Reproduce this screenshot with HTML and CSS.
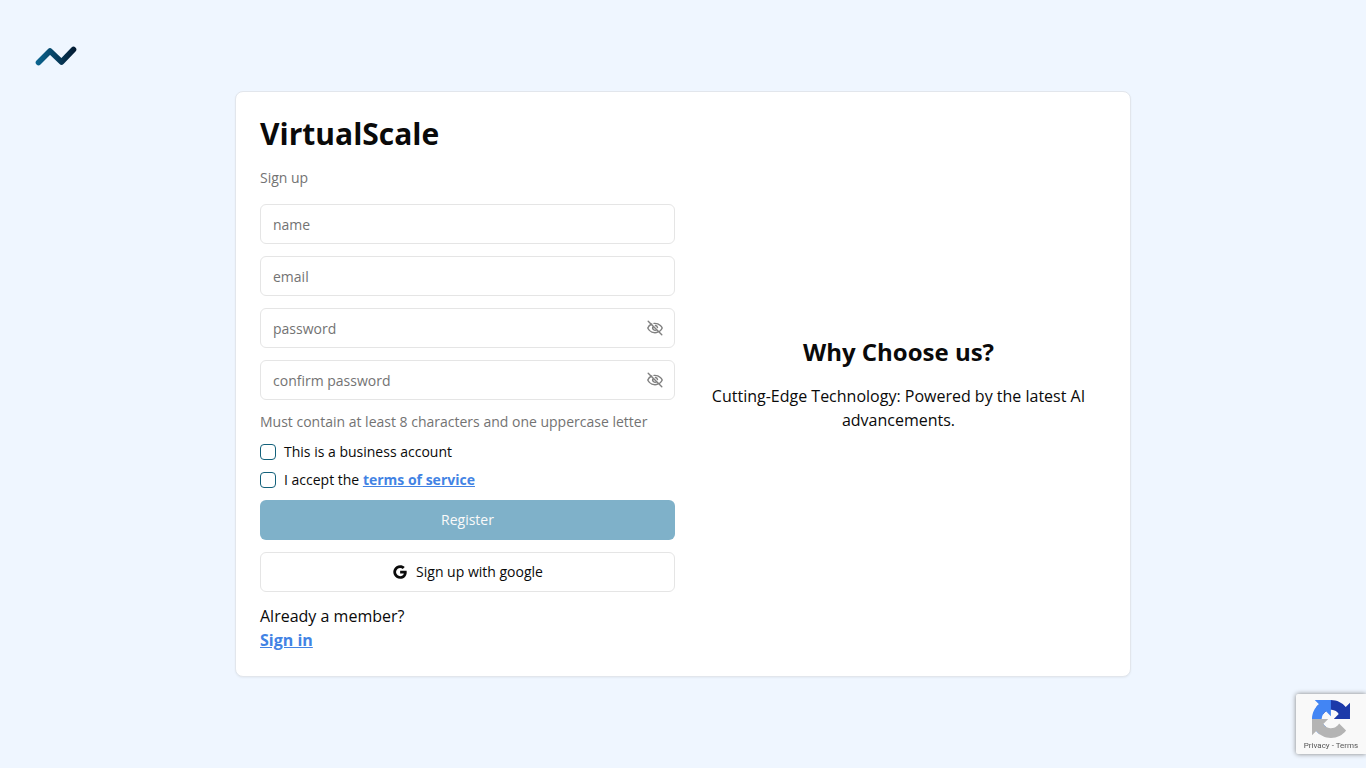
FILE: index.html
```html
<!DOCTYPE html>
<html lang="en">
<head>
    <meta charset="UTF-8">
    <meta name="viewport" content="width=device-width, initial-scale=1.0">
    <title>VirtualScale - Sign up</title>
    <link rel="stylesheet" href="styles.css">
</head>
<body>
    <header class="header">
        <a href="#" class="logo" aria-label="VirtualScale">
            <svg width="42" height="20" viewBox="0 0 42 20" fill="none">
                <defs>
                    <linearGradient id="logo-color" gradientUnits="userSpaceOnUse" x1="0" y1="0" x2="42" y2="0">
                        <stop offset="0" stop-color="#0b6894"/>
                        <stop offset="1" stop-color="#03182f"/>
                    </linearGradient>
                </defs>
                <path d="M3.5 16.500 15 5 26.500 16 38.500 3.500" stroke="url(#logo-color)" stroke-width="5.600" stroke-linecap="round" stroke-linejoin="round"/>
            </svg>
        </a>
    </header>

    <main class="card">
        <form class="signup">
            <h1 class="title">VirtualScale</h1>
            <p class="subtitle">Sign up</p>
            <div class="fields">
                <input class="input" type="text" placeholder="name" aria-label="name">
                <input class="input" type="email" placeholder="email" aria-label="email">
                <div class="password">
                    <input class="input" type="password" placeholder="password" aria-label="password">
                    <button class="toggle" type="button" aria-label="Show password">
                        <svg width="16" height="16" viewBox="0 0 16 16"><use href="#eye-off"/></svg>
                    </button>
                </div>
                <div class="password">
                    <input class="input" type="password" placeholder="confirm password" aria-label="confirm password">
                    <button class="toggle" type="button" aria-label="Show password">
                        <svg width="16" height="16" viewBox="0 0 16 16"><use href="#eye-off"/></svg>
                    </button>
                </div>
                <p class="hint">Must contain at least 8 characters and one uppercase letter</p>
                <div class="check">
                    <input type="checkbox" id="business">
                    <label for="business">This is a business account</label>
                </div>
                <div class="check">
                    <input type="checkbox" id="terms">
                    <label for="terms">I accept the <a href="#" class="link">terms of service</a></label>
                </div>
                <button class="btn btn-primary" type="submit" disabled>Register</button>
                <button class="btn btn-outline" type="button">
                    <svg width="16" height="16" viewBox="64 64 896 896" fill="currentColor">
                        <path d="M881 442.4H519.7v148.5h206.4c-8.9 48-35.9 88.6-76.6 115.8-34.4 23-78.3 36.6-129.9 36.6-99.9 0-184.4-67.5-214.6-158.2-7.6-23-12-47.6-12-72.9s4.4-49.9 12-72.9c30.3-90.6 114.8-158.1 214.7-158.1 56.3 0 106.8 19.4 146.6 57.4l110-110.1c-66.500-62-153.2-100-256.6-100-149.9 0-279.6 86-342.7 211.4-26 51.8-40.8 110.4-40.8 172.4S151 632.8 177 684.6C240.1 810 369.8 896 519.7 896c103.6 0 190.4-34.4 253.8-93 72.5-66.8 114.4-165.2 114.4-282.1 0-27.2-2.4-53.3-6.9-78.5z"/>
                    </svg>
                    Sign up with google
                </button>
                <div class="member">
                    <p>Already a member?</p>
                    <a href="#" class="link">Sign in</a>
                </div>
            </div>
        </form>
        <section class="why">
            <h2>Why Choose us?</h2>
            <p>Cutting-Edge Technology: Powered by the latest AI advancements.</p>
        </section>
    </main>

    <div class="recaptcha">
        <svg width="38" height="38" viewBox="0 0 64 64">
            <path fill="#1c3aa9" d="M64 31.955l-.033-1.37V4.687l-7.16 7.16C50.948 4.674 42.033.093 32.05.093c-10.4 0-19.622 4.96-25.458 12.64l11.736 11.86a15.55 15.55 0 0 1 4.754-5.334c2.05-1.6 4.952-2.906 8.968-2.906.485 0 .86.057 1.135.163 4.976.393 9.288 3.14 11.828 7.124l-8.307 8.307L64 31.953"/>
            <path fill="#4285f4" d="M31.862.094l-1.37.033H4.594l7.16 7.16C4.58 13.147 0 22.06 0 32.046c0 10.4 4.96 19.622 12.64 25.458L24.5 45.768a15.55 15.55 0 0 1-5.334-4.754c-1.6-2.05-2.906-4.952-2.906-8.968 0-.485.057-.86.163-1.135.393-4.976 3.14-9.288 7.124-11.828l8.307 8.307L31.86.095"/>
            <path fill="#b4b4b4" d="M.001 32.045l.033 1.37v25.898l7.16-7.16c5.86 7.173 14.774 11.754 24.757 11.754 10.4 0 19.622-4.96 25.458-12.64l-11.736-11.86a15.55 15.55 0 0 1-4.754 5.334c-2.05 1.6-4.952 2.906-8.968 2.906-.485 0-.86-.057-1.135-.163-4.976-.393-9.288-3.14-11.828-7.124l8.307-8.307c-10.522.04-22.4.066-27.295-.005"/>
        </svg>
        <div class="recaptcha-links"><a href="#">Privacy</a> - <a href="#">Terms</a></div>
    </div>

    <svg class="symbols">
        <symbol id="eye-off" viewBox="0 0 16 16">
            <path d="M4.800 4C1.800 5.200.8 8 .8 8S2.700 12.700 8 12.700c1 0 1.900-.2 2.700-.5M7 3.400c6-.5 8.200 4.600 8.200 4.600s-.7 1.700-2.300 3M6.200 6.300a2.500 2.500 0 0 0 3.500 3.500M8.400 5.500a2.500 2.500 0 0 1 2.100 2.100M1.200 1.200l13.600 13.600" fill="none" stroke="currentColor" stroke-width="1.400" stroke-linecap="round"/>
        </symbol>
    </svg>
</body>
</html>
```
FILE: styles.css
```css
* {
    box-sizing: border-box;
    margin: 0;
}
body {
    font-family: "Open Sans", sans-serif;
    font-size: 16px;
    line-height: 24px;
    color: #0a0a0a;
    background-color: #eff6ff;
    min-height: 100vh;
    display: grid;
    grid-template-rows: 1fr auto 1fr;
}
.header {
    padding: 46px 35px 0;
}
.logo svg {
    display: block;
}
.card {
    width: 100%;
    max-width: 896px;
    margin: 0 auto;
    padding: 24px;
    display: grid;
    grid-template-columns: 1fr 1fr;
    gap: 16px;
    background-color: #fff;
    border: 1px solid #e2e6ec;
    border-radius: 8px;
    box-shadow: 0 1px 2px rgba(0, 0, 0, 0.05);
}
.signup {
    display: flex;
    flex-direction: column;
    gap: 16px;
}
.title {
    font-size: 30px;
    line-height: 36px;
}
.subtitle,
.hint {
    font-size: 14px;
    line-height: 20px;
    color: #737373;
}
.fields {
    display: flex;
    flex-direction: column;
    gap: 12px;
}
.input {
    width: 100%;
    height: 40px;
    padding: 0 12px;
    font: inherit;
    font-size: 14px;
    background-color: #fff;
    border: 1px solid #e5e5e5;
    border-radius: 6px;
}
.input::placeholder {
    color: #737373;
}
.password {
    position: relative;
    display: flex;
}
.toggle {
    position: absolute;
    top: 12px;
    right: 12px;
    padding: 0;
    border: none;
    background: none;
    color: #808080;
    cursor: pointer;
}
.toggle svg {
    display: block;
}
.check {
    display: flex;
    align-items: center;
    gap: 8px;
    font-size: 14px;
    line-height: 16px;
}
.check input {
    appearance: none;
    width: 16px;
    height: 16px;
    border: 1px solid #13617b;
    border-radius: 4px;
}
.check input:checked {
    background-color: #0b6894;
}
.link {
    color: #4283e4;
    font-weight: 700;
    text-decoration: underline;
}
.btn {
    height: 40px;
    display: flex;
    align-items: center;
    justify-content: center;
    gap: 8px;
    font: inherit;
    font-size: 14px;
    border-radius: 6px;
    cursor: pointer;
}
.btn-primary {
    color: #fafafa;
    background-color: #7fb1c9;
    border: none;
}
.btn-outline {
    color: #0a0a0a;
    background-color: #fff;
    border: 1px solid #e5e5e5;
}
.why {
    display: flex;
    flex-direction: column;
    justify-content: center;
    gap: 16px;
    text-align: center;
}
.why h2 {
    font-size: 24px;
    line-height: 32px;
}
.recaptcha {
    position: fixed;
    right: 0;
    bottom: 14px;
    width: 70px;
    height: 60px;
    padding-top: 6px;
    display: flex;
    flex-direction: column;
    align-items: center;
    background-color: #f9f9f9;
    border-radius: 2px 0 0 2px;
    box-shadow: 0 0 5px gray;
}
.recaptcha-links {
    font-family: Roboto, sans-serif;
    font-size: 8px;
    line-height: 16px;
    color: #555;
    white-space: nowrap;
}
.recaptcha-links a {
    color: inherit;
    text-decoration: none;
}
.symbols {
    position: absolute;
    width: 0;
    height: 0;
}
```
